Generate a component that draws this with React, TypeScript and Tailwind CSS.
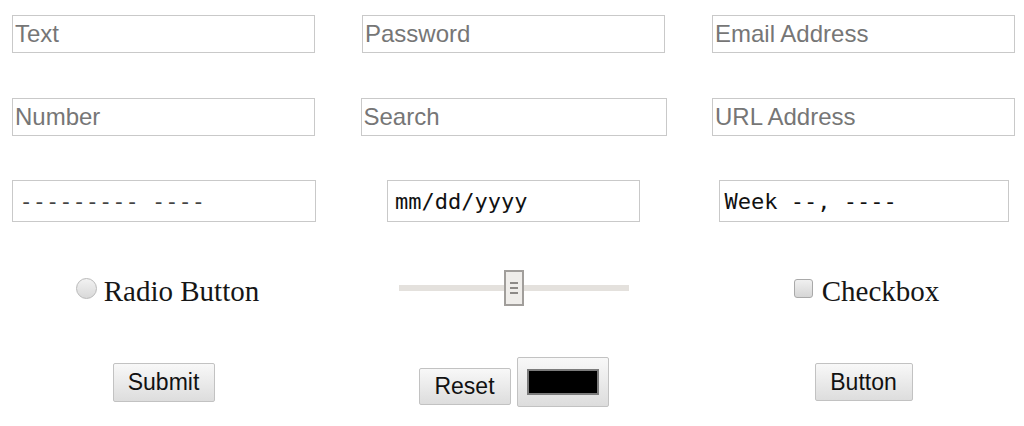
import type { ReactNode } from "react";

const sans = "font-['Liberation_Sans',Arial,sans-serif]";
const mono = "font-['DejaVu_Sans_Mono',monospace]";
const serif = "font-['Liberation_Serif','Times_New_Roman',serif]";

function Row({ className, children }: { className: string; children: ReactNode }) {
  return (
    <div
      className={`grid grid-cols-[303px_303px_303px] gap-x-[47px] justify-items-center items-center ${className}`}
    >
      {children}
    </div>
  );
}

function TextField({ placeholder, type = "text", width = "w-[303px]" }: { placeholder: string; type?: string; width?: string }) {
  return (
    <input
      type={type}
      placeholder={placeholder}
      className={`${width} h-[38px] border border-[#c9c9c9] bg-white px-[2px] text-[24px] text-black outline-none placeholder:text-[#767676] ${sans}`}
    />
  );
}

function MaskField({ text, width, pad, color }: { text: string; width: string; pad: string; color: string }) {
  return (
    <div
      className={`${width} h-[42px] flex items-center border border-[#c9c9c9] bg-white ${pad} text-[22px] whitespace-pre ${color} ${mono}`}
    >
      {text}
    </div>
  );
}

const btn =
  "rounded-[2px] border border-[#c2c2c2] bg-gradient-to-b from-[#f8f8f8] to-[#dddddd] text-[23px] text-[#111] " +
  sans;

export default function App() {
  return (
    <div className="min-h-[426px] w-[1024px] overflow-hidden bg-white pl-[12px] pt-[15px]">
      <Row className="">
        <TextField placeholder="Text" />
        <TextField placeholder="Password" type="password" />
        <TextField placeholder="Email Address" type="email" />
      </Row>

      <Row className="mt-[45px]">
        <TextField placeholder="Number" />
        <TextField placeholder="Search" type="search" width="w-[306px]" />
        <TextField placeholder="URL Address" type="url" />
      </Row>

      <Row className="mt-[44px]">
        <MaskField text="--------- ----" width="w-[304px]" pad="pl-[7px]" color="text-[#444]" />
        <MaskField text="mm/dd/yyyy" width="w-[253px]" pad="pl-[7px]" color="text-[#111]" />
        <MaskField text="Week --, ----" width="w-[290px]" pad="pl-[5px]" color="text-[#111]" />
      </Row>

      <Row className="mt-[48px] h-[36px]">
        <label className="ml-[8px] flex items-center gap-[7px]">
          <span className="block h-[21px] w-[21px] rounded-full border border-[#b9b9b9] bg-gradient-to-b from-[#f2f2f2] to-[#d9d9d9]" />
          <span className={`mt-[7px] text-[29px] leading-none text-[#161616] ${serif}`}>Radio Button</span>
        </label>

        <div className="relative flex h-[36px] w-[230px] items-center">
          <div className="h-[6px] w-full bg-[#e4e1dd]" />
          <div className="absolute left-[105px] top-0 flex h-[36px] w-[20px] flex-col items-center justify-center gap-[3px] border-2 border-[#a19e9b] bg-[#efedea]">
            <span className="block h-[2px] w-[8px] bg-[#8d8a87]" />
            <span className="block h-[2px] w-[8px] bg-[#8d8a87]" />
            <span className="block h-[2px] w-[8px] bg-[#8d8a87]" />
          </div>
        </div>

        <label className="ml-[6px] flex items-center gap-[9px]">
          <span className="block h-[19px] w-[19px] rounded-[3px] border border-[#a9a9a9] bg-gradient-to-b from-[#f0f0f0] to-[#d6d6d6]" />
          <span className={`mt-[7px] text-[29px] leading-none text-[#161616] ${serif}`}>Checkbox</span>
        </label>
      </Row>

      <Row className="mt-[51px] h-[50px]">
        <button className={`h-[39px] w-[102px] ${btn}`}>Submit</button>

        <div className="flex items-end gap-[6px]">
          <button className={`mb-[2px] h-[37px] w-[92px] ${btn}`}>Reset</button>
          <button className={`flex h-[50px] w-[92px] items-center justify-center ${btn}`}>
            <span className="block h-[26px] w-[72px] border-2 border-[#7c7c7c] bg-black" />
          </button>
        </div>

        <button className={`h-[38px] w-[98px] ${btn}`}>Button</button>
      </Row>
    </div>
  );
}
